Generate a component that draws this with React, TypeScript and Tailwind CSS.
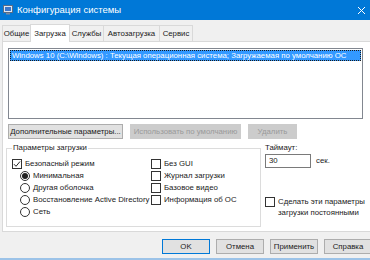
import type { ReactNode } from "react";

const tabs = [
  { t: "Общие", w: "w-[29px]" },
  { t: "Загрузка", w: "w-[40px]" },
  { t: "Службы", w: "w-[35px]" },
  { t: "Автозагрузка", w: "w-[57px]" },
  { t: "Сервис", w: "w-[34px]" },
];

function Check({ checked, label }: { checked?: boolean; label: ReactNode }) {
  return (
    <div className="flex items-start gap-[3px] h-[12px]">
      <span className="w-[10px] h-[10px] border border-[#333] bg-white flex items-center justify-center shrink-0 mt-[1px]">
        {checked && (
          <svg width="8" height="8" viewBox="0 0 8 8">
            <path d="M1 4.2 L3 6.3 L7 1.5" fill="none" stroke="#222" strokeWidth="1" />
          </svg>
        )}
      </span>
      <span className="leading-[12px]">{label}</span>
    </div>
  );
}

function Radio({ checked, label }: { checked?: boolean; label: string }) {
  return (
    <div className="flex items-center gap-[3px] h-[12px]">
      <span className="w-[10px] h-[10px] rounded-full border border-[#333] bg-white flex items-center justify-center shrink-0">
        {checked && <span className="w-[6px] h-[6px] rounded-full bg-[#222]" />}
      </span>
      <span className="leading-[12px]">{label}</span>
    </div>
  );
}

function Btn({ children, w, disabled, primary }: { children: ReactNode; w: string; disabled?: boolean; primary?: boolean }) {
  return (
    <div
      className={`${w} h-[15px] flex items-center justify-center border ${
        primary ? "border-[#0078d7] bg-[#e1e1e1]" : disabled ? "border-[#cccccc] bg-[#cccccc] text-[#9a9a9a]" : "border-[#adadad] bg-[#e1e1e1]"
      }`}
    >
      {children}
    </div>
  );
}

export default function App() {
  return (
    <div
      className="w-[370px] h-[260px] overflow-hidden bg-[#f0f0f0] text-[7.8px] text-[#1a1a1a] flex flex-col whitespace-nowrap"
      style={{ fontFamily: '"Liberation Sans", Arial, sans-serif' }}
    >
      <div className="h-[20px] bg-[#0078d7] flex items-center text-white shrink-0">
        <svg className="ml-[3px]" width="10" height="10" viewBox="0 0 10 10">
          <rect x="0.5" y="0.5" width="9" height="7" fill="#dfe8f3" stroke="#5a6c86" />
          <rect x="2" y="2" width="6" height="4" fill="#3b77c9" />
          <rect x="3" y="8" width="4" height="1.5" fill="#7a8aa0" />
        </svg>
        <span className="ml-[4px] text-[9.5px]">Конфигурация системы</span>
        <svg className="ml-auto mr-[4px]" width="9" height="9" viewBox="0 0 9 9">
          <path d="M1 1 L8 8 M8 1 L1 8" stroke="white" strokeWidth="1" />
        </svg>
      </div>

      <div className="flex items-end pl-[2px] pt-[3px] h-[21px] shrink-0">
        {tabs.map((x, i) =>
          i === 1 ? (
            <div key={x.t} className={`${x.w} h-[18px] bg-white border border-b-0 border-[#d9d9d9] flex items-center justify-center -mb-px -ml-px relative z-10`}>
              {x.t}
            </div>
          ) : (
            <div key={x.t} className={`${x.w} h-[16px] bg-[#f0f0f0] border border-b-0 border-[#d9d9d9] -ml-px first:ml-0 flex items-center justify-center`}>
              {x.t}
            </div>
          )
        )}
      </div>

      <div className="ml-[2px] w-[380px] h-[191px] bg-white border border-[#d9d9d9] pl-[5px] pt-[6px] flex flex-col shrink-0">
        <div className="w-[355px] h-[71px] border border-[#828790] bg-white p-[1px]">
          <div className="h-[11px] bg-[#3399ff] text-white border border-dotted border-[#1a1a1a] px-[1px] flex items-center">
            Windows 10 (C:\Windows) : Текущая операционная система; Загружаемая по умолчанию ОС
          </div>
        </div>

        <div className="flex gap-[7px] mt-[5px]">
          <Btn w="w-[115px]">Дополнительные параметры...</Btn>
          <Btn w="w-[111px]" disabled>Использовать по умолчанию</Btn>
          <Btn w="w-[49px]" disabled>Удалить</Btn>
        </div>

        <div className="flex mt-[3px]">
          <div className="relative w-[255px] h-[79px] mt-[6px] border border-[#dcdcdc] -ml-[2px]">
            <span className="absolute -top-[7px] left-[5px] bg-white px-[1px] leading-[12px]">Параметры загрузки</span>
            <div className="flex pt-[9px] pl-[5px]">
              <div className="flex flex-col w-[139px]">
                <Check checked label="Безопасный режим" />
                <div className="flex flex-col pl-[8px]">
                  <Radio checked label="Минимальная" />
                  <Radio label="Другая оболочка" />
                  <Radio label="Восстановление Active Directory" />
                  <Radio label="Сеть" />
                </div>
              </div>
              <div className="flex flex-col">
                <Check label="Без GUI" />
                <Check label="Журнал загрузки" />
                <Check label="Базовое видео" />
                <Check label="Информация  об ОС" />
              </div>
            </div>
          </div>

          <div className="flex flex-col ml-[4px] w-[100px]">
            <span className="leading-[12px]">Таймаут:</span>
            <div className="flex items-center">
              <div className="w-[46px] h-[14px] border border-[#7a7a7a] bg-white pl-[3px] flex items-center">30</div>
              <span className="ml-[5px]">сек.</span>
            </div>
            <div className="mt-[28px] flex items-start gap-[3px]">
              <span className="w-[10px] h-[10px] border border-[#333] bg-white shrink-0 mt-[1px]" />
              <span className="leading-[11px]">
                Сделать эти параметры
                <br />
                загрузки постоянными
              </span>
            </div>
          </div>
        </div>
      </div>

      <div className="flex justify-end gap-[6px] mt-[7px] mr-[-2px]">
        <Btn w="w-[48px]" primary>OK</Btn>
        <Btn w="w-[48px]">Отмена</Btn>
        <Btn w="w-[48px]">Применить</Btn>
        <Btn w="w-[48px]">Справка</Btn>
      </div>
      <div className="mt-auto h-[2px] bg-[#9cc3e8]" />
    </div>
  );
}
